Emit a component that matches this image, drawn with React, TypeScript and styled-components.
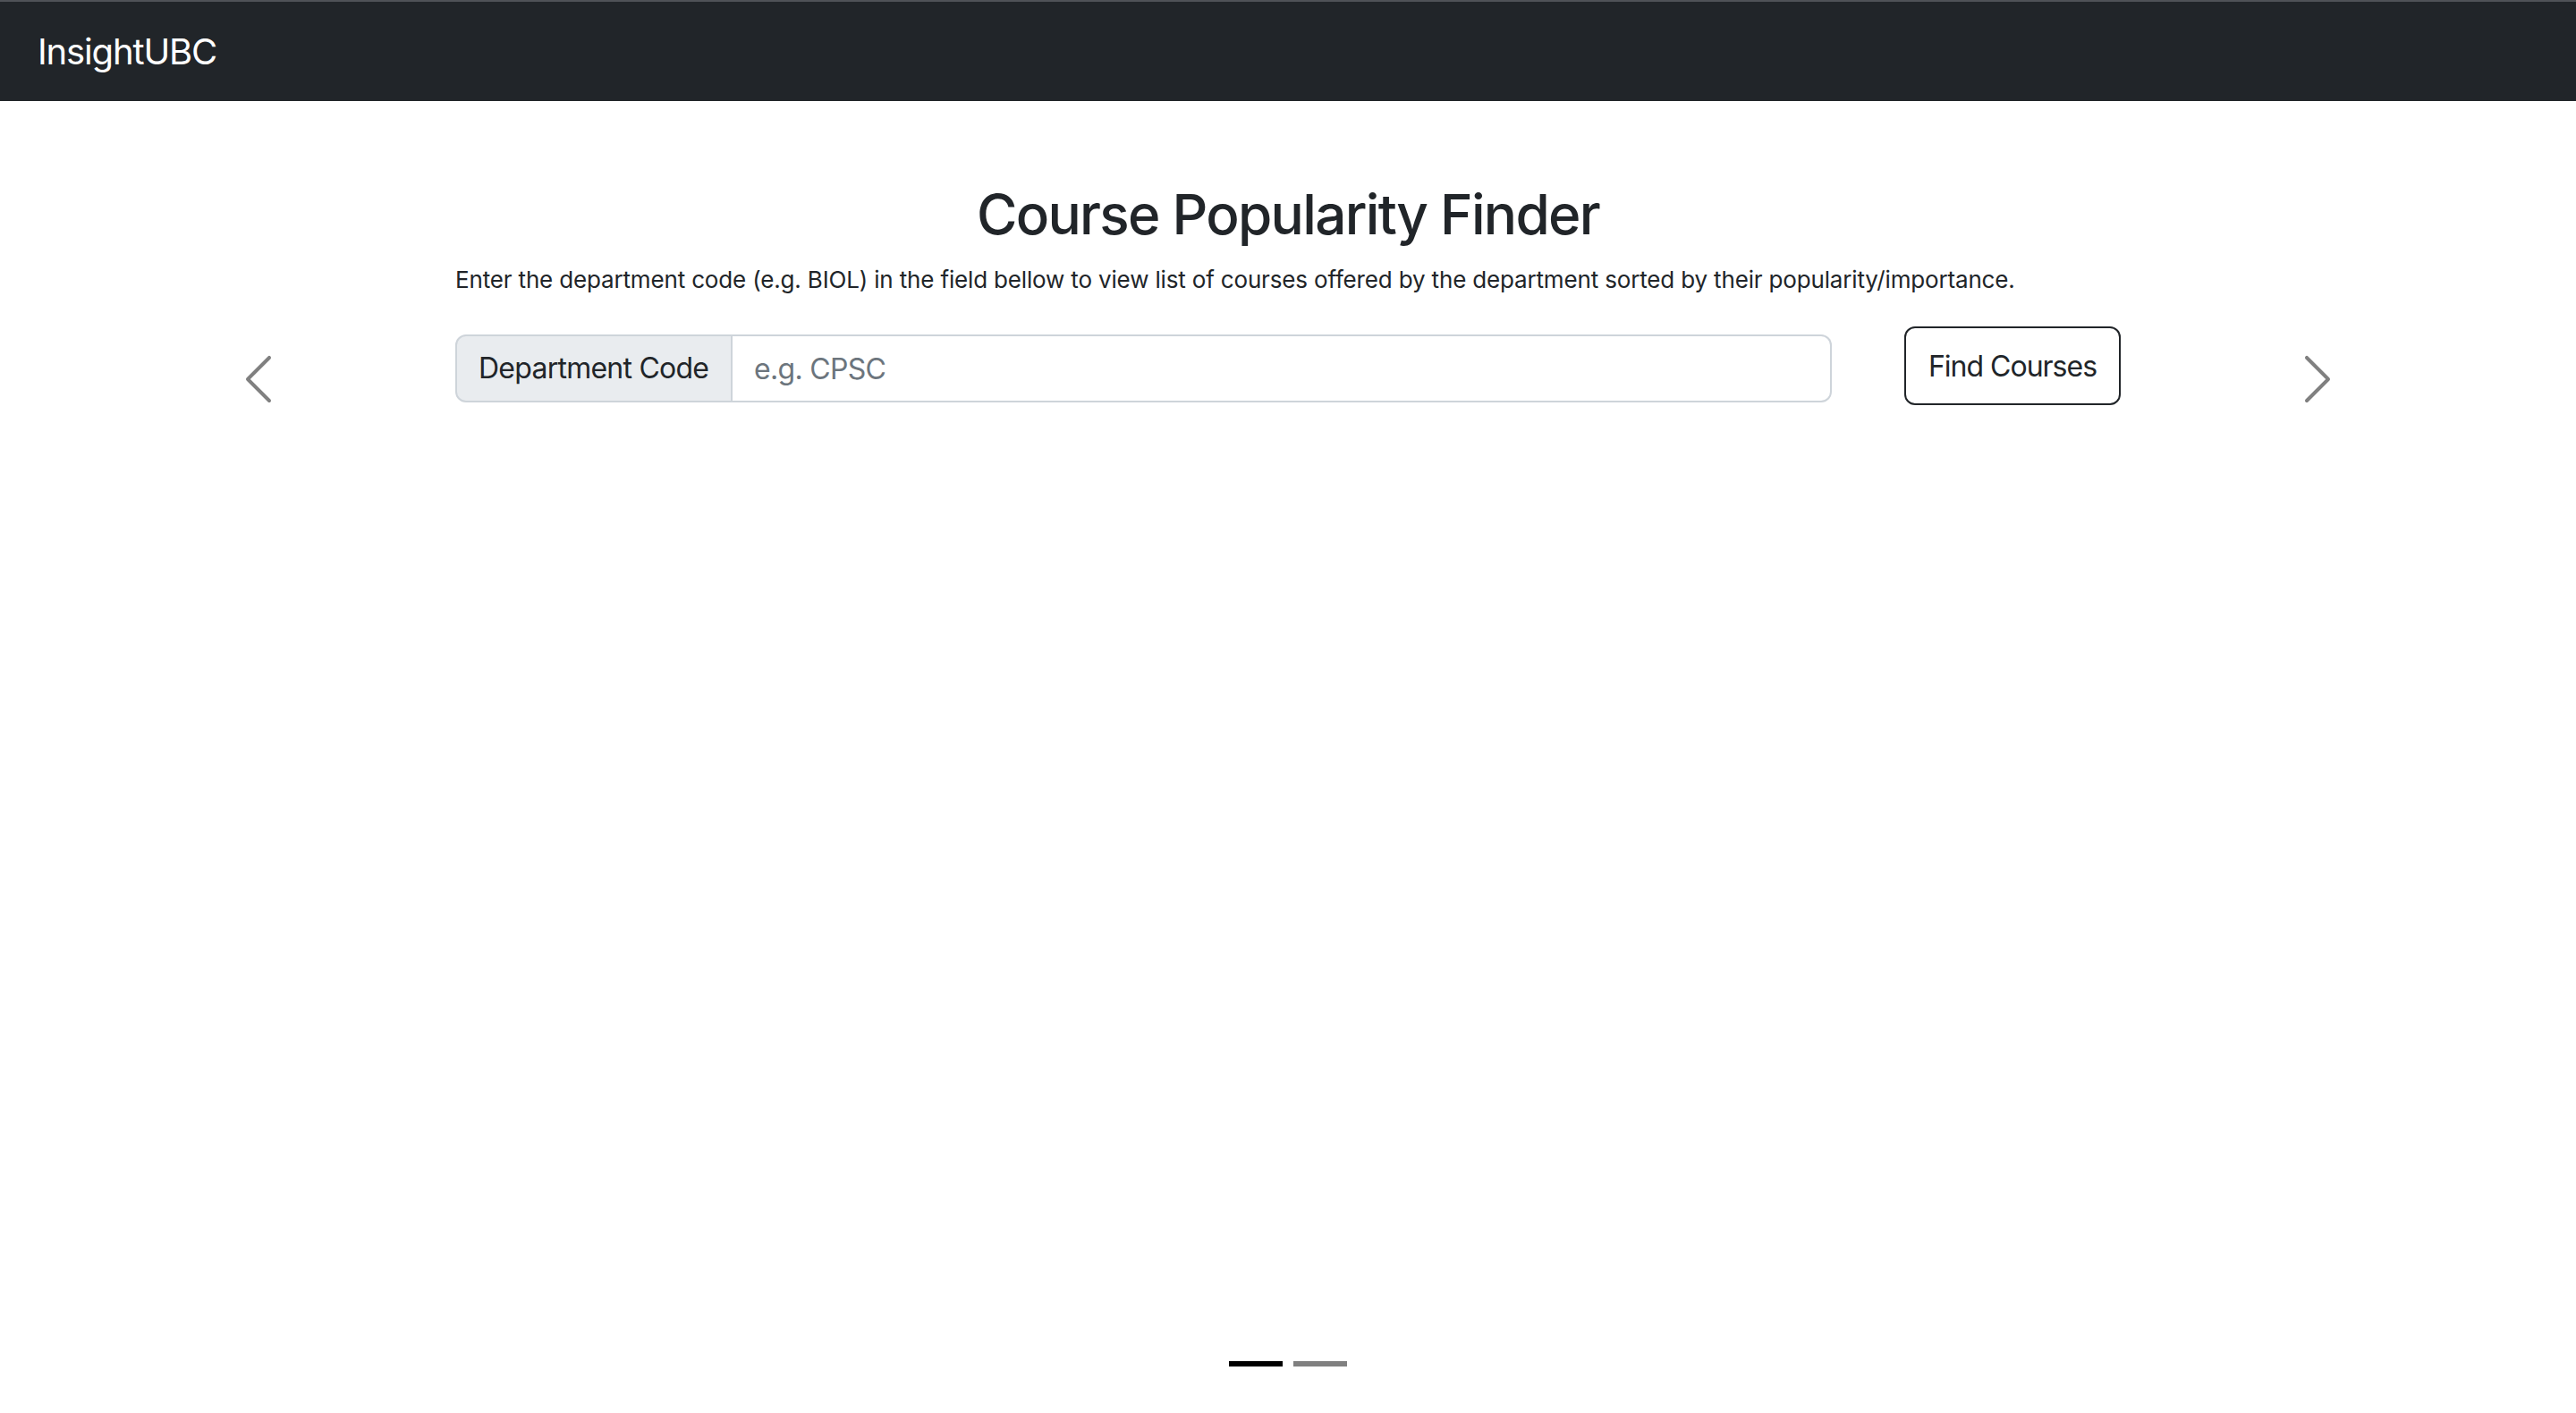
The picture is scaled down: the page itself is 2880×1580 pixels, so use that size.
import * as React from "react"
import styled, { createGlobalStyle } from "styled-components"

const GlobalStyle = createGlobalStyle`
    html, body {
        margin: 0;
        padding: 0;
        background: #ffffff;
    }

    body {
        font-family: Inter, "Noto Sans", "Liberation Sans", sans-serif;
        color: #212529;
        -webkit-font-smoothing: antialiased;
    }

    * {
        box-sizing: border-box;
    }
`

const Page = styled.div`
    min-height: 100vh;
    display: flex;
    flex-direction: column;
`

const Navbar = styled.nav`
    height: 113px;
    display: flex;
    align-items: center;
    padding: 0 42px;
    background: #212529;
    border-top: 2px solid #4f5257;
`

const Brand = styled.a`
    color: #ffffff;
    font-size: 40px;
    line-height: 1.5;
    letter-spacing: -1.15px;
    text-decoration: none;
`

const Carousel = styled.section`
    flex: 1;
    display: flex;
    flex-direction: column;
`

const Slide = styled.div`
    display: grid;
    grid-template-columns: 1fr 1862px 1fr;
`

const Control = styled.button<{ side: "prev" | "next" }>`
    display: flex;
    align-items: flex-start;
    justify-content: ${({ side }) => (side === "prev" ? "flex-end" : "flex-start")};
    padding: 279px 0 0;
    ${({ side }) => (side === "prev" ? "padding-right: 188px;" : "padding-left: 188px;")}
    border: 0;
    background: transparent;
    cursor: pointer;

    svg {
        width: 64px;
        height: 64px;
        fill: #808080;
    }
`

const Content = styled.div`
    padding-top: 90px;
`

const Title = styled.h2`
    margin: 0 0 16px;
    text-align: center;
    font-size: 62px;
    font-weight: 500;
    line-height: 1.2;
    letter-spacing: -1.7px;
`

const Lead = styled.p`
    margin: 0 0 33px;
    font-size: 26px;
    line-height: 1.5;
    letter-spacing: -0.16px;
    white-space: nowrap;
`

const SearchRow = styled.div`
    display: flex;
    align-items: flex-start;
    gap: 81px;
`

const InputGroup = styled.div`
    flex: 1;
    display: flex;
    margin-top: 9px;
    height: 76px;
`

const GroupLabel = styled.span`
    width: 310px;
    display: flex;
    align-items: center;
    padding: 0 24px;
    font-size: 32px;
    line-height: 1.5;
    letter-spacing: -0.75px;
    background: #e9ecef;
    border: 2px solid #ced4da;
    border-radius: 12px 0 0 12px;
    white-space: nowrap;
`

const TextInput = styled.input`
    flex: 1;
    min-width: 0;
    padding: 0 24px;
    font-family: inherit;
    font-size: 32px;
    color: #212529;
    background: #ffffff;
    border: 2px solid #ced4da;
    border-left: 0;
    border-radius: 0 12px 12px 0;
    outline: none;
    letter-spacing: -0.7px;

    &::placeholder {
        color: #6c757d;
    }
`

const OutlineButton = styled.button`
    width: 242px;
    height: 88px;
    padding: 0 24px;
    font-family: inherit;
    font-size: 32px;
    letter-spacing: -1px;
    color: #212529;
    background: #ffffff;
    border: 2px solid #212529;
    border-radius: 12px;
    cursor: pointer;
    white-space: nowrap;
`

const Indicators = styled.div`
    margin-top: auto;
    margin-bottom: 52px;
    display: flex;
    justify-content: center;
    gap: 12px;
`

const Indicator = styled.button<{ active: boolean }>`
    width: 60px;
    height: 6px;
    padding: 0;
    border: 0;
    background: ${({ active }) => (active ? "#000000" : "#808080")};
    cursor: pointer;
`

const ChevronLeft = () => (
  <svg viewBox="0 0 16 16" aria-hidden="true">
    <path d="M11.354 1.646a.5.5 0 0 1 0 .708L5.707 8l5.647 5.646a.5.5 0 0 1-.708.708l-6-6a.5.5 0 0 1 0-.708l6-6a.5.5 0 0 1 .708 0z" />
  </svg>
)

const ChevronRight = () => (
  <svg viewBox="0 0 16 16" aria-hidden="true">
    <path d="M4.646 1.646a.5.5 0 0 1 .708 0l6 6a.5.5 0 0 1 0 .708l-6 6a.5.5 0 0 1-.708-.708L10.293 8 4.646 2.354a.5.5 0 0 1 0-.708z" />
  </svg>
)

const App = () => {
  const [slide, setSlide] = React.useState(0)
  const [code, setCode] = React.useState("")

  return (
    <Page>
      <GlobalStyle />
      <Navbar>
        <Brand href="#">InsightUBC</Brand>
      </Navbar>
      <Carousel>
        <Slide>
          <Control side="prev" aria-label="Previous" onClick={() => setSlide(s => (s + 1) % 2)}>
            <ChevronLeft />
          </Control>
          <Content>
            <Title>Course Popularity Finder</Title>
            <Lead>
              Enter the department code (e.g. BIOL) in the field bellow to view list of courses offered by the
              department sorted by their popularity/importance.
            </Lead>
            <SearchRow>
              <InputGroup>
                <GroupLabel>Department Code</GroupLabel>
                <TextInput
                  placeholder="e.g. CPSC"
                  value={code}
                  onChange={e => setCode(e.target.value)}
                />
              </InputGroup>
              <OutlineButton>Find Courses</OutlineButton>
            </SearchRow>
          </Content>
          <Control side="next" aria-label="Next" onClick={() => setSlide(s => (s + 1) % 2)}>
            <ChevronRight />
          </Control>
        </Slide>
        <Indicators>
          {[0, 1].map(i => (
            <Indicator key={i} active={slide === i} onClick={() => setSlide(i)} />
          ))}
        </Indicators>
      </Carousel>
    </Page>
  )
}

export default App
